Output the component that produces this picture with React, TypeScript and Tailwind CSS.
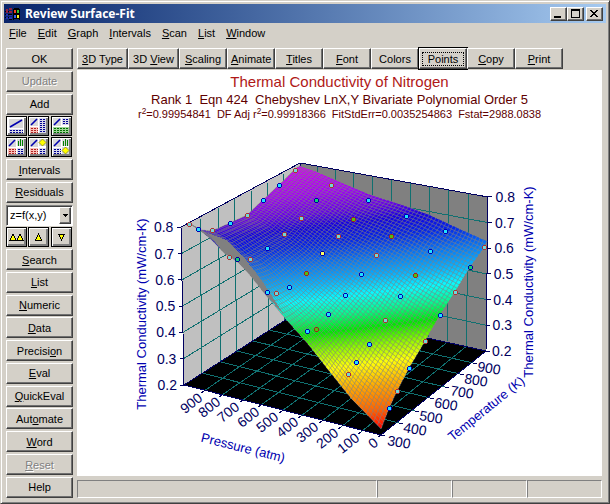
import { useState } from "react";
import type { ReactNode } from "react";

type Pt = [number, number];

const menus = ["&File", "&Edit", "&Graph", "&Intervals", "&Scan", "&List", "&Window"];

const tools = [
  { label: "&3D Type", wide: true },
  { label: "3D &View", wide: true },
  { label: "&Scaling" },
  { label: "&Animate" },
  { label: "&Titles" },
  { label: "&Font" },
  { label: "Colors" },
  { label: "Points" },
  { label: "&Copy" },
  { label: "&Print" },
];

const sideButtons = [
  { label: "&Search" },
  { label: "&List" },
  { label: "&Numeric" },
  { label: "&Data" },
  { label: "Precisi&on" },
  { label: "&Eval" },
  { label: "&QuickEval" },
  { label: "Aut&omate" },
  { label: "&Word" },
  { label: "&Reset", disabled: true },
  { label: "Help" },
];

// "&" marks the letter that is underlined
function Mnemonic({ text }: { text: string }) {
  const i = text.indexOf("&");
  if (i < 0) return <>{text}</>;
  return (
    <>
      {text.slice(0, i)}
      <u className="underline-offset-1">{text[i + 1]}</u>
      {text.slice(i + 2)}
    </>
  );
}

const raised =
  "border border-white border-r-[#404040] border-b-[#404040] shadow-[inset_-1px_-1px_0_#707070] bg-[#d4d0c8]";

function SideButton({ label, disabled }: { label: string; disabled?: boolean }) {
  return (
    <button
      disabled={disabled}
      className={`${raised} h-[21px] w-full text-center leading-4 disabled:text-[#808080] disabled:[text-shadow:1px_1px_0_#fff]`}
    >
      <Mnemonic text={label} />
    </button>
  );
}

function IconButton({ label, children }: { label: string; children: ReactNode }) {
  return (
    <button
      aria-label={label}
      className="h-5 w-[21px] border border-black bg-[#d4d0c8] shadow-[inset_1px_1px_0_#fff,inset_-1px_-1px_0_#808080,inset_-2px_-2px_0_#808080]"
    >
      <svg viewBox="0 0 19 18" className="block h-full w-full" shapeRendering="crispEdges">
        {children}
      </svg>
    </button>
  );
}

function Curve({ x, y, w, h }: { x: number; y: number; w: number; h: number }) {
  return (
    <g>
      <rect x={x} y={y} width={w} height={h} fill="#d8d8d8" />
      <path
        d={`M${x + 1} ${y + h - 1}L${x + w - 1} ${y + 1}`}
        stroke="#0000b0"
        strokeWidth="1.6"
        shapeRendering="geometricPrecision"
      />
    </g>
  );
}

function Cells({ x, y, w, h, ink, paper }: { x: number; y: number; w: number; h: number; ink: string; paper: string }) {
  const rows = [];
  for (let r = y + 1; r < y + h; r += 2) rows.push(r);
  return (
    <g>
      <rect x={x} y={y} width={w} height={h} fill={paper} />
      {rows.map((r) => (
        <path key={r} d={`M${x + 1} ${r + 0.5}H${x + w}`} stroke={ink} strokeDasharray="2 1" />
      ))}
    </g>
  );
}

function Bars({ x, y }: { x: number; y: number }) {
  return (
    <g fill="#008000">
      <rect x={x} y={y} width="7" height="7" fill="#d8d8d8" />
      <rect x={x + 1} y={y + 2} width="1" height="5" />
      <rect x={x + 3} y={y} width="1" height="7" />
      <rect x={x + 5} y={y + 1} width="1" height="6" />
    </g>
  );
}

function Diamond({ x, y }: { x: number; y: number }) {
  return (
    <g>
      <rect x={x} y={y} width="7" height="7" fill="#d8d8d8" />
      <path
        d={`M${x + 3.5} ${y}l3.5 3.5l-3.5 3.5l-3.5 -3.5z`}
        fill="#ffff00"
        stroke="#808000"
        strokeWidth="0.7"
        shapeRendering="geometricPrecision"
      />
    </g>
  );
}

const blue = { ink: "#000090", paper: "#d8d8e8" };
const red = { ink: "#b02020", paper: "#f8c0b8" };
const green = { ink: "#007000", paper: "#a0d498" };

function ViewIcons() {
  return (
    <div className="grid grid-cols-3 justify-between gap-y-px">
      <IconButton label="Plot and data">
        <rect x="1" y="1" width="16" height="15" fill="#fff" />
        <Curve x={2} y={2} w={14} h={9} />
        <Cells x={2} y={12} w={14} h={4} {...blue} />
      </IconButton>
      <IconButton label="Plot, residuals and data">
        <rect x="1" y="1" width="16" height="15" fill="#fff" />
        <Curve x={1} y={1} w={8} h={8} />
        <Cells x={1} y={10} w={8} h={6} {...red} />
        <Cells x={10} y={1} w={7} h={15} {...blue} />
      </IconButton>
      <IconButton label="Plot, data and evaluation">
        <rect x="1" y="1" width="16" height="15" fill="#fff" />
        <Curve x={1} y={1} w={8} h={8} />
        <Cells x={10} y={1} w={7} h={7} {...blue} />
        <Cells x={1} y={10} w={16} h={6} {...green} />
      </IconButton>
      <IconButton label="Plot, histogram and data">
        <rect x="1" y="1" width="16" height="15" fill="#fff" />
        <Curve x={1} y={1} w={8} h={8} />
        <Bars x={10} y={1} />
        <Cells x={1} y={10} w={8} h={6} {...red} />
        <Cells x={10} y={10} w={7} h={6} {...blue} />
      </IconButton>
      <IconButton label="Plot, marker and data">
        <rect x="1" y="1" width="16" height="15" fill="#fff" />
        <Curve x={1} y={1} w={8} h={8} />
        <Diamond x={10} y={1} />
        <Cells x={1} y={10} w={8} h={6} {...red} />
        <Cells x={10} y={10} w={7} h={6} {...blue} />
      </IconButton>
      <IconButton label="Plot, histogram and marker">
        <rect x="1" y="1" width="16" height="15" fill="#fff" />
        <Curve x={1} y={1} w={8} h={8} />
        <Bars x={10} y={1} />
        <Cells x={1} y={10} w={8} h={6} {...blue} />
        <Diamond x={10} y={9} />
      </IconButton>
    </div>
  );
}

// edges of the fitted surface on the screen
const frontEdge: Pt[] = [[381, 429], [350, 397], [330, 372], [308, 344], [285, 318], [265, 294], [250, 275], [238, 262], [224, 253], [212, 240], [201, 231], [189, 223]];
const rightEdge: Pt[] = [[381, 429], [389, 408], [397, 391], [409, 368], [425, 341], [440, 315], [455, 292], [470, 267], [484, 248], [487, 241]];
const backEdge: Pt[] = [[300, 166], [317, 172], [340, 182], [371, 195], [400, 204], [430, 215], [460, 229], [487, 241]];
const leftEdge: Pt[] = [[189, 223], [200, 230], [212, 231], [230, 223], [247, 215], [263, 200], [279, 185], [295, 169], [300, 166]];

function along(edge: Pt[], f: number): Pt {
  const lens = edge.slice(1).map((p, i) => Math.hypot(p[0] - edge[i][0], p[1] - edge[i][1]));
  let left = f * lens.reduce((a, b) => a + b, 0);
  for (let i = 0; i < lens.length; i++) {
    if (left <= lens[i] || i === lens.length - 1) {
      const t = Math.min(1, left / lens[i]);
      return [edge[i][0] + (edge[i + 1][0] - edge[i][0]) * t, edge[i][1] + (edge[i + 1][1] - edge[i][1]) * t];
    }
    left -= lens[i];
  }
  return edge[edge.length - 1];
}

// u runs with pressure, v with temperature
function surface(u: number, v: number): Pt {
  const f = along(frontEdge, u);
  const b = along(backEdge, 1 - u);
  const r = along(rightEdge, v);
  const l = along(leftEdge, v);
  const at = (k: 0 | 1) =>
    (1 - v) * f[k] + v * b[k] + (1 - u) * r[k] + u * l[k] -
    (1 - u) * (1 - v) * (k ? 429 : 381) -
    (u * (1 - v) * (k ? 223 : 189) + (1 - u) * v * (k ? 241 : 487) + u * v * (k ? 166 : 300));
  return [at(0), at(1)];
}

const toPath = (pts: Pt[]) => "M" + pts.map((p) => `${p[0].toFixed(1)} ${p[1].toFixed(1)}`).join("L");

const DIV = 54;
const steps = Array.from({ length: DIV + 1 }, (_, i) => i / DIV);
const mesh = steps
  .map((a) => toPath(steps.map((b) => surface(a, b))) + toPath(steps.map((b) => surface(b, a))))
  .join("");
const outline = toPath([...frontEdge, ...leftEdge, ...backEdge, ...[...rightEdge].reverse()]) + "Z";

const gradient: [number, string][] = [
  [160, "#d000f8"],
  [185, "#a400f8"],
  [205, "#6400e8"],
  [219, "#1400e0"],
  [236, "#0424e8"],
  [256, "#0874f4"],
  [276, "#08b4ff"],
  [292, "#08faff"],
  [309, "#08f890"],
  [326, "#00e800"],
  [345, "#98f800"],
  [362, "#ffff08"],
  [385, "#ffa800"],
  [410, "#ff6000"],
  [429, "#ff0000"],
];

// c: cyan on blue ring, r: cyan on red ring, g: green on blue, o: olive on red, y: yellow on blue
const markers: [number, number, string][] = [
  [189, 224, "r"], [198, 229, "c"], [212, 230, "r"], [230, 223, "c"], [247, 215, "r"], [263, 200, "c"],
  [279, 185, "c"], [295, 170, "r"], [331, 185, "r"], [316, 200, "g"], [301, 218, "r"], [284, 234, "r"],
  [267, 248, "c"], [229, 257, "r"], [237, 259, "g"], [250, 259, "r"], [338, 236, "r"], [322, 253, "y"],
  [306, 273, "o"], [289, 287, "c"], [267, 292, "c"], [276, 293, "r"], [345, 295, "c"], [328, 314, "c"],
  [368, 200, "c"], [406, 216, "c"], [445, 231, "c"], [353, 219, "o"], [391, 236, "o"], [430, 251, "c"],
  [376, 255, "r"], [361, 274, "c"], [415, 275, "o"], [484, 247, "r"], [470, 267, "g"], [455, 292, "r"],
  [400, 296, "c"], [440, 315, "c"], [307, 331, "c"], [316, 329, "o"], [385, 320, "r"], [369, 344, "c"],
  [356, 362, "c"], [348, 374, "r"], [425, 341, "r"], [409, 368, "c"], [397, 391, "r"], [389, 408, "c"],
];

const markerColors: Record<string, [string, string]> = {
  c: ["#20e0ff", "#0000b0"],
  r: ["#70d8d8", "#b03030"],
  g: ["#10d070", "#0000a0"],
  o: ["#50c010", "#a02020"],
  y: ["#ffff60", "#0000a0"],
};

const pressureTicks: [string, number, number][] = [
  ["900", 191, 403], ["800", 209, 407], ["700", 228, 412], ["600", 248, 417], ["500", 267, 422],
  ["400", 287, 427], ["300", 307, 432], ["200", 327, 438], ["100", 348, 443], ["0", 373, 443],
];
const temperatureTicks: [string, number, number][] = [
  ["300", 399, 442], ["400", 415, 429], ["500", 431, 417], ["600", 446, 404],
  ["700", 462, 392], ["800", 476, 380], ["900", 489, 368],
];

const levels = [0, 1, 2, 3, 4, 5, 6];
const wallX = [317, 335, 354, 373, 392, 411, 430, 449, 469];
const wallBottomX = [317, 335, 353, 372, 391, 409, 428, 447, 466];
const floorFront: Pt[] = [[204, 391], [222, 395], [243, 400], [261, 405], [282, 411], [301, 416], [322, 421], [341, 427], [361, 432]];
const floorRight: Pt[] = [[399, 423], [415, 411], [430, 398], [445, 387], [460, 374], [473, 363]];
const leftBottom: Pt[] = [[202, 373], [221, 362], [237, 351], [253, 341], [269, 330], [285, 320]];
const leftTopX = [200, 218, 234, 251, 267, 283];

function SurfacePlot() {
  const grid =
    levels
      .slice(1, 6)
      .map((n) => `M${184 - n * 0.5} ${385 - n * 26.3}L301 ${310 - n * 24.5}L${486 + n * 0.3} ${351 - n * 25.7}`)
      .join("") +
    wallX.map((x, i) => `M${x} ${163 + (x - 300) * 0.181}L${wallBottomX[i]} ${310 + (wallBottomX[i] - 301) * 0.222}L${floorFront[i][0]} ${floorFront[i][1]}`).join("") +
    leftTopX.map((x, i) => `M${x} ${227 - (x - 181) * 0.538}L${leftBottom[i][0]} ${leftBottom[i][1]}L${floorRight[i][0]} ${floorRight[i][1]}`).join("");

  return (
    <svg
      viewBox="77 124 525 352"
      className="block w-full font-['Liberation_Sans',Arial,sans-serif]"
      role="img"
      aria-label="Surface fit of thermal conductivity against pressure and temperature"
    >
      <defs>
        <linearGradient id="fit" gradientUnits="userSpaceOnUse" x1="348" y1="164" x2="380" y2="429">
          {gradient.map(([y, color]) => (
            <stop key={y} offset={(y - 160) / 269} stopColor={color} />
          ))}
        </linearGradient>
      </defs>

      <g shapeRendering="crispEdges">
        <path d="M181 227L300 163L301 310L184 385z" fill="#c0c0c0" />
        <path d="M300 163L488 197L486 351L301 310z" fill="#808080" />
        <path d="M184 385L301 310L486 351L381 435z" fill="#000" />
        <path d={grid} fill="none" stroke="#107070" />
        <path d="M184 385L301 310L486 351M300 163V310" fill="none" stroke="#000060" />
        <path d="M184 385L181 227L300 163L488 197L486 351L381 435z" fill="none" stroke="#000060" />
        {levels.map((n) => (
          <path key={n} d={`M${180 - n * 0.5} ${385 - n * 26.3}h4M${486 + n * 0.3} ${351 - n * 25.7}h4`} stroke="#000060" />
        ))}
        {[...floorFront, [381, 435] as Pt].map(([x, y]) => (
          <path key={x} d={`M${x} ${y}l-3 2`} stroke="#000060" />
        ))}
        {[...floorRight, [381, 435] as Pt].map(([x, y]) => (
          <path key={x} d={`M${x} ${y}l4 1`} stroke="#000060" />
        ))}

        <path d={outline} fill="url(#fit)" />
        <path d={mesh} fill="none" stroke="#808080" strokeOpacity="0.85" strokeWidth="0.7" shapeRendering="geometricPrecision" />
        <path d="M208 233L226 240L243 256L262 281L285 316L265 294L250 275L238 262L224 253z" fill="#808080" />

        {markers.map(([x, y, kind]) => (
          <g key={`${x}-${y}`}>
            <path d={`M${x - 1} ${y - 2}h3v1h1v3h-1v1h-3v-1h-1v-3h1z`} fill={markerColors[kind][1]} />
            <rect x={x - 1} y={y - 1} width="3" height="3" fill={markerColors[kind][0]} />
          </g>
        ))}
      </g>

      <g fill="#000060" fontSize="14">
        {levels.map((n) => (
          <text key={n} x={177 - n * 0.6} y={390 - n * 26.3} textAnchor="end">
            {((n + 2) / 10).toFixed(1)}
          </text>
        ))}
        {levels.map((n) => (
          <text key={n} x={492 + n * 0.6} y={356 - n * 25.7}>
            {((n + 2) / 10).toFixed(1)}
          </text>
        ))}
        {pressureTicks.map(([label, x, y]) => (
          <text key={label} textAnchor="middle" dy="5" transform={`translate(${x} ${y}) rotate(-38)`}>
            {label}
          </text>
        ))}
        {temperatureTicks.map(([label, x, y]) => (
          <text key={label} textAnchor="middle" dy="5" transform={`translate(${x} ${y}) rotate(10)`}>
            {label}
          </text>
        ))}
      </g>

      <g fill="#0000b0" fontSize="13" textAnchor="middle">
        <text transform="translate(146 314) rotate(-90)">Thermal Conductivity (mW/cm-K)</text>
        <text transform="translate(533 282) rotate(-90)">Thermal Conductivity (mW/cm-K)</text>
        <text transform="translate(242 452) rotate(14)">Pressure (atm)</text>
        <text transform="translate(489 412) rotate(-39)">Temperature (K)</text>
      </g>
    </svg>
  );
}

function TitleBar() {
  return (
    <header className="flex h-[19px] items-center gap-1 bg-linear-to-r from-[#0a246a] to-[#a6caf0] pr-[3px] pl-px text-white">
      <svg viewBox="0 0 16 14" className="h-3.5 w-4" shapeRendering="crispEdges" aria-hidden="true">
        <path d="M8 2h1v-1h5v1h1v11h-1v-1h-5v1h-1z" fill="#000" />
        <rect x="9" y="3" width="2" height="3" fill="#f04020" />
        <rect x="12" y="3" width="2" height="3" fill="#30c030" />
        <rect x="9" y="8" width="2" height="3" fill="#3060f0" />
        <rect x="12" y="8" width="2" height="3" fill="#f8f020" />
        <path d="M1 3h2M4 2h3M1 5h2M4 5h3" stroke="#902040" strokeWidth="1.4" />
        <path d="M1 8h2M4 8h3M1 11h2M4 11h3" stroke="#2030b0" strokeWidth="1.4" />
        <path d="M0 4h1M3 4h1M0 7h1M3 7h4M0 10h1M3 10h1M4 12h3" stroke="#000" />
      </svg>
      <h1 className="grow font-['Noto_Sans','Open_Sans',sans-serif] text-[12px] leading-4 font-bold">Review Surface-Fit</h1>
      <div className="flex text-black">
        <button aria-label="Minimize" className={`${raised} h-3.5 w-[17px]`}>
          <svg viewBox="0 0 15 12" className="block" shapeRendering="crispEdges">
            <rect x="3" y="8" width="7" height="2" />
          </svg>
        </button>
        <button aria-label="Maximize" className={`${raised} mr-0.5 h-3.5 w-[17px]`}>
          <svg viewBox="0 0 15 12" className="block" shapeRendering="crispEdges">
            <path d="M3 1h9v9h-9zM4 3v6h7v-6z" fillRule="evenodd" />
          </svg>
        </button>
        <button aria-label="Close" className={`${raised} h-3.5 w-[17px]`}>
          <svg viewBox="0 0 15 12" className="block" shapeRendering="crispEdges">
            <path d="M3 2h2v1h1v1h2v-1h1v-1h2v1h-1v1h-1v1h-1v1h1v1h1v1h1v1h-2v-1h-1v-1h-2v1h-1v1h-2v-1h1v-1h1v-1h1v-1h-1v-1h-1v-1h-1z" />
          </svg>
        </button>
      </div>
    </header>
  );
}

export default function App() {
  const [fn, setFn] = useState("z=f(x,y)");
  const [active, setActive] = useState("Points");

  return (
    <main className="flex min-h-screen flex-col border border-[#d4d0c8] border-r-[#404040] border-b-[#404040] bg-[#d4d0c8] p-[3px] font-['Liberation_Sans',Arial,sans-serif] text-[11px] text-black shadow-[inset_1px_1px_0_#fff,inset_-1px_-1px_0_#808080]">
      <TitleBar />
      <nav className="flex h-[25px] items-start gap-[11px] px-[5px] pt-0.5 leading-4">
        {menus.map((m) => (
          <button key={m}>
            <Mnemonic text={m} />
          </button>
        ))}
      </nav>

      <div className="flex grow gap-1 pr-1 pl-0.5">
        <aside className="flex w-[67px] shrink-0 flex-col justify-between pb-0.5">
          <SideButton label="OK" />
          <SideButton label="Update" disabled />
          <SideButton label="Add" />
          <ViewIcons />
          <SideButton label="&Intervals" />
          <SideButton label="&Residuals" />
          <div className="relative">
            <select
              aria-label="Function"
              value={fn}
              onChange={(e) => setFn(e.target.value)}
              className="block h-[21px] w-full appearance-none border border-[#808080] border-r-white border-b-white bg-white pl-[3px] shadow-[inset_1px_1px_0_#404040]"
            >
              <option>z=f(x,y)</option>
              <option>x=f(y,z)</option>
            </select>
            <span className={`${raised} pointer-events-none absolute top-0.5 right-0.5 flex h-[17px] w-3 items-center justify-center`}>
              <svg viewBox="0 0 5 3" className="h-[3px] w-[5px]" shapeRendering="crispEdges">
                <path d="M0 0h5v1h-1v1h-1v1h-1v-1h-1v-1h-1z" />
              </svg>
            </span>
          </div>
          <div className="grid grid-cols-3 justify-between">
            <IconButton label="First">
              <path d="M6 6L9 12H3zM13 6L16 12H10z" fill="#ffff00" stroke="#000" />
            </IconButton>
            <IconButton label="Up">
              <path d="M9.500 6L12.500 12H6.500z" fill="#ffff00" stroke="#000" />
            </IconButton>
            <IconButton label="Down">
              <path d="M9.500 12L12.500 6H6.500z" fill="#ffff00" stroke="#000" />
            </IconButton>
          </div>
          {sideButtons.map((b) => (
            <SideButton key={b.label} {...b} />
          ))}
        </aside>

        <div className="flex grow flex-col">
          <div className="flex h-[22px]">
            {tools.map((t) => (
              <button
                key={t.label}
                onClick={() => setActive(t.label)}
                className={`h-[21px] p-0.5 leading-3 ${t.wide ? "w-[51px]" : "w-12"} ${raised} ${active === t.label ? "outline outline-black" : ""}`}
              >
                <span className={`block border border-dotted ${active === t.label ? "border-black" : "border-transparent"}`}>
                  <Mnemonic text={t.label} />
                </span>
              </button>
            ))}
          </div>
          <section className="grow bg-white">
            <div className="flex h-[54px] flex-col items-center pt-0.5 whitespace-pre text-[#600000]">
              <h2 className="text-[15px] leading-5 text-[#b01818]">Thermal Conductivity of Nitrogen</h2>
              <p className="text-[13px] leading-4">Rank 1  Eqn 424  Chebyshev LnX,Y Bivariate Polynomial Order 5</p>
              <p className="text-[11px] leading-3">
                r<sup>2</sup>=0.99954841  DF Adj r<sup>2</sup>=0.99918366  FitStdErr=0.0035254863  Fstat=2988.0838
              </p>
            </div>
            <SurfacePlot />
          </section>
          <footer className="mt-1 mb-0.5 grid h-[18px] grid-cols-[1fr_75px_75px_75px]">
            {[0, 1, 2, 3].map((n) => (
              <div key={n} className="border border-[#808080] border-r-white border-b-white" />
            ))}
          </footer>
        </div>
      </div>
    </main>
  );
}
